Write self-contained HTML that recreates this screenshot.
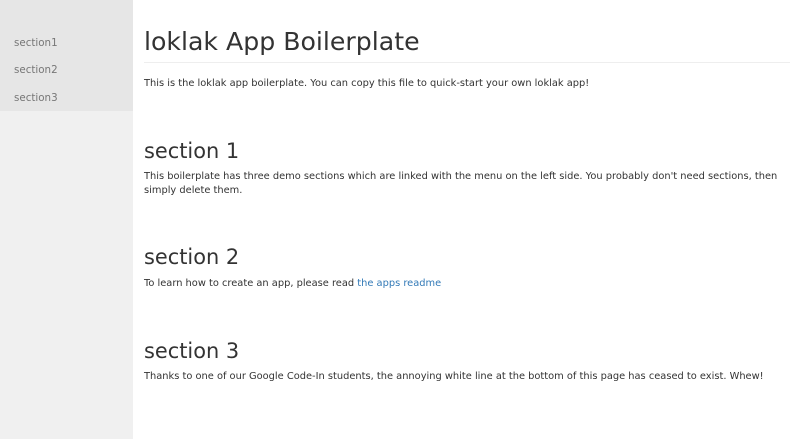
<!DOCTYPE html>
<html><head><style>
body{margin:0;width:800px;height:439px;overflow:hidden;background:#fff;font-family:"DejaVu Sans",sans-serif;color:#333;position:relative}
.side{position:absolute;left:0;top:0;width:133px;height:439px;background:#f0f0f0}
.nav{position:absolute;left:0;top:0;width:133px;height:111px;background:#e6e6e6}
.nav div{position:absolute;left:14px;font-size:10.3px;color:#777}
.a{position:absolute;left:144px;white-space:nowrap}
p{margin:0;font-size:9.85px;line-height:14px}
a{color:#337ab7;text-decoration:none}
</style></head><body>
<div class="side"></div>
<div class="nav"><div style="top:37px">section1</div><div style="top:64px">section2</div><div style="top:92px">section3</div></div>
<div class="a" style="top:25px;font-size:25.2px;line-height:34px">loklak App Boilerplate</div>
<div style="position:absolute;left:144px;top:62px;width:646px;height:1px;background:#eee"></div>
<p class="a" style="top:77px">This is the loklak app boilerplate. You can copy this file to quick-start your own loklak app!</p>
<div class="a" style="top:137px;font-size:20.9px;line-height:28px">section 1</div>
<p class="a" style="top:170px">This boilerplate has three demo sections which are linked with the menu on the left side. You probably don't need sections, then<br>simply delete them.</p>
<div class="a" style="top:243px;font-size:20.9px;line-height:28px">section 2</div>
<p class="a" style="top:277px">To learn how to create an app, please read <a>the apps readme</a></p>
<div class="a" style="top:337px;font-size:20.9px;line-height:28px">section 3</div>
<p class="a" style="top:370px">Thanks to one of our Google Code-In students, the annoying white line at the bottom of this page has ceased to exist. Whew!</p>
</body></html>
